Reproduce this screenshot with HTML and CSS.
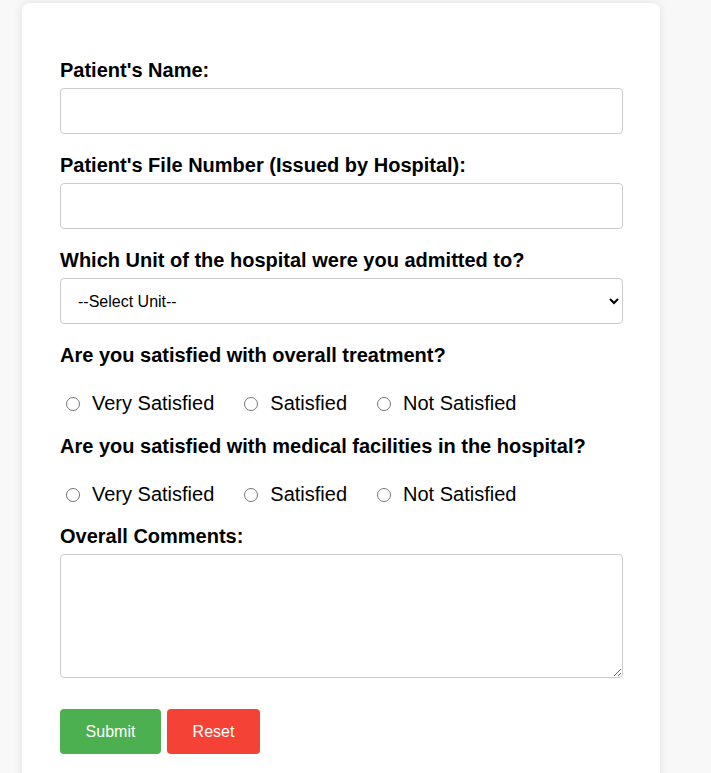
FILE: index.html
```html
<!DOCTYPE html>
<html lang="en">
<head>
<meta charset="utf-8">
<title>Patient Feedback</title>
<link rel="stylesheet" href="styles.css">
</head>
<body>
<div class="card">
  <form class="form">
    <div class="field">
      <label class="label" for="name">Patient's Name:</label>
      <input class="input" type="text" id="name">
    </div>
    <div class="field">
      <label class="label" for="file">Patient's File Number (Issued by Hospital):</label>
      <input class="input" type="text" id="file">
    </div>
    <div class="field">
      <label class="label" for="unit">Which Unit of the hospital were you admitted to?</label>
      <select class="input select" id="unit">
        <option>--Select Unit--</option>
      </select>
    </div>
    <div class="field">
      <div class="label">Are you satisfied with overall treatment?</div>
      <div class="options">
        <label class="option"><input class="radio" type="radio" name="t">Very Satisfied</label>
        <label class="option"><input class="radio" type="radio" name="t">Satisfied</label>
        <label class="option"><input class="radio" type="radio" name="t">Not Satisfied</label>
      </div>
    </div>
    <div class="field field-last-radio">
      <div class="label">Are you satisfied with medical facilities in the hospital?</div>
      <div class="options">
        <label class="option"><input class="radio" type="radio" name="f">Very Satisfied</label>
        <label class="option"><input class="radio" type="radio" name="f">Satisfied</label>
        <label class="option"><input class="radio" type="radio" name="f">Not Satisfied</label>
      </div>
    </div>
    <div class="field field-comments">
      <label class="label" for="comments">Overall Comments:</label>
      <textarea class="input textarea" id="comments"></textarea>
    </div>
    <div class="buttons">
      <button class="btn btn-submit" type="button">Submit</button>
      <button class="btn btn-reset" type="button">Reset</button>
    </div>
  </form>
</div>
</body>
</html>
```

FILE: styles.css
```css
html, body {
  margin: 0;
  padding: 0;
}
body {
  background: #f8f8f8;
  font-family: "Liberation Sans", Arial, sans-serif;
  color: #000;
  padding: 3px 0 0 22px;
}
.card {
  box-sizing: border-box;
  width: 638px;
  min-height: 800px;
  background: #fff;
  border-radius: 8px;
  box-shadow: 0 0 10px rgba(0, 0, 0, 0.1);
  padding: 56px 37px 0 38px;
}
.form {
  display: block;
}
.field {
  margin-bottom: 20px;
}
.field-last-radio {
  margin-bottom: 19px;
}
.label {
  display: block;
  font-size: 20px;
  font-weight: bold;
  line-height: 23px;
  margin-bottom: 6px;
}
.input {
  display: block;
  box-sizing: border-box;
  width: 100%;
  height: 46px;
  margin: 0;
  border: 1px solid #ccc;
  border-radius: 4px;
  padding: 12px;
  font-family: "Liberation Sans", Arial, sans-serif;
  font-size: 16px;
  background: #fff;
  color: #000;
}
.select {
  padding: 0 12px 0 13px;
}
.textarea {
  height: 124px;
  resize: vertical;
}
.field-comments {
  margin-bottom: 31px;
}
.options {
  display: flex;
  align-items: center;
  margin-top: 25px;
  font-size: 20px;
  line-height: 23px;
}
.option {
  display: inline-flex;
  align-items: center;
  margin-right: 24px;
}
.radio {
  width: 14px;
  height: 14px;
  margin: 0 12px 0 6px;
}
.buttons {
  display: flex;
  gap: 6px;
}
.btn {
  border: 0;
  border-radius: 4px;
  color: #fff;
  font-family: "Liberation Sans", Arial, sans-serif;
  font-size: 16px;
  line-height: 19px;
  padding: 13px 0;
  cursor: pointer;
}
.btn-submit {
  background: #4caf50;
  width: 101px;
}
.btn-reset {
  background: #f44336;
  width: 93px;
}
```
